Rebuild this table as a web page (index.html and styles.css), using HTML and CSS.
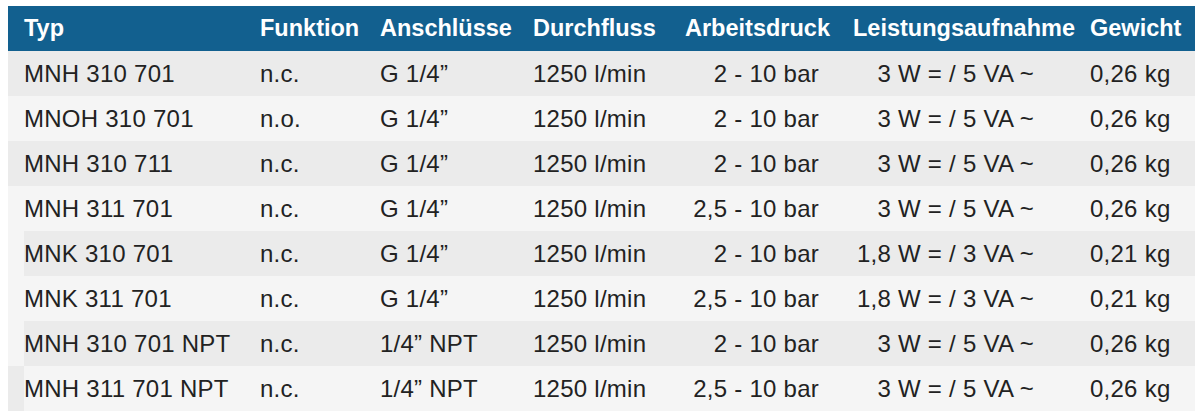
FILE: index.html
```html
<!DOCTYPE html>
<html lang="de">
<head>
<meta charset="utf-8">
<title>Ventile</title>
<link rel="stylesheet" href="styles.css">
</head>
<body>
<div class="page">
  <div class="table">
    <div class="row head">
      <div class="pad"></div>
      <div class="cell">Typ</div>
      <div class="cell">Funktion</div>
      <div class="cell">Anschlüsse</div>
      <div class="cell">Durchfluss</div>
      <div class="cell">Arbeitsdruck</div>
      <div class="cell">Leistungsaufnahme</div>
      <div class="cell">Gewicht</div>
    </div>
    <div class="row dark">
      <div class="pad pd"></div>
      <div class="cell">MNH 310 701</div>
      <div class="cell">n.c.</div>
      <div class="cell">G 1/4”</div>
      <div class="cell">1250 l/min</div>
      <div class="cell num druck">2 - 10 bar</div>
      <div class="cell num leist">3 W = / 5 VA ~</div>
      <div class="cell">0,26 kg</div>
    </div>
    <div class="row light">
      <div class="pad pl"></div>
      <div class="cell">MNOH 310 701</div>
      <div class="cell">n.o.</div>
      <div class="cell">G 1/4”</div>
      <div class="cell">1250 l/min</div>
      <div class="cell num druck">2 - 10 bar</div>
      <div class="cell num leist">3 W = / 5 VA ~</div>
      <div class="cell">0,26 kg</div>
    </div>
    <div class="row dark">
      <div class="pad pd"></div>
      <div class="cell">MNH 310 711</div>
      <div class="cell">n.c.</div>
      <div class="cell">G 1/4”</div>
      <div class="cell">1250 l/min</div>
      <div class="cell num druck">2 - 10 bar</div>
      <div class="cell num leist">3 W = / 5 VA ~</div>
      <div class="cell">0,26 kg</div>
    </div>
    <div class="row light">
      <div class="pad pl"></div>
      <div class="cell">MNH 311 701</div>
      <div class="cell">n.c.</div>
      <div class="cell">G 1/4”</div>
      <div class="cell">1250 l/min</div>
      <div class="cell num druck">2,5 - 10 bar</div>
      <div class="cell num leist">3 W = / 5 VA ~</div>
      <div class="cell">0,26 kg</div>
    </div>
    <div class="row dark">
      <div class="pad pl"></div>
      <div class="cell">MNK 310 701</div>
      <div class="cell">n.c.</div>
      <div class="cell">G 1/4”</div>
      <div class="cell">1250 l/min</div>
      <div class="cell num druck">2 - 10 bar</div>
      <div class="cell num leist">1,8 W = / 3 VA ~</div>
      <div class="cell">0,21 kg</div>
    </div>
    <div class="row light">
      <div class="pad pl"></div>
      <div class="cell">MNK 311 701</div>
      <div class="cell">n.c.</div>
      <div class="cell">G 1/4”</div>
      <div class="cell">1250 l/min</div>
      <div class="cell num druck">2,5 - 10 bar</div>
      <div class="cell num leist">1,8 W = / 3 VA ~</div>
      <div class="cell">0,21 kg</div>
    </div>
    <div class="row dark">
      <div class="pad pl"></div>
      <div class="cell">MNH 310 701 NPT</div>
      <div class="cell">n.c.</div>
      <div class="cell">1/4” NPT</div>
      <div class="cell">1250 l/min</div>
      <div class="cell num druck">2 - 10 bar</div>
      <div class="cell num leist">3 W = / 5 VA ~</div>
      <div class="cell">0,26 kg</div>
    </div>
    <div class="row light">
      <div class="pad pd"></div>
      <div class="cell">MNH 311 701 NPT</div>
      <div class="cell">n.c.</div>
      <div class="cell">1/4” NPT</div>
      <div class="cell">1250 l/min</div>
      <div class="cell num druck">2,5 - 10 bar</div>
      <div class="cell num leist">3 W = / 5 VA ~</div>
      <div class="cell">0,26 kg</div>
    </div>
  </div>
</div>
</body>
</html>
```

FILE: styles.css
```css
html, body {
  margin: 0;
  padding: 0;
  background: #ffffff;
}

.page {
  padding: 6px 0 0 8px;
}

.table {
  width: 1187px;
  font-family: "Liberation Sans", Arial, Helvetica, sans-serif;
  font-size: 24px;
  letter-spacing: 0.25px;
  color: #222222;
}

.row {
  display: grid;
  grid-template-columns: 16px 236px 120px 153px 152px 168px 237px 105px;
  height: 45px;
  align-items: center;
}

.cell {
  white-space: nowrap;
  line-height: 45px;
}

.head {
  background: #12608f;
  color: #ffffff;
  font-weight: bold;
  font-size: 23.5px;
  letter-spacing: 0;
}

.dark {
  background: #ebebeb;
}

.light {
  background: #f5f5f5;
}

.pad {
  align-self: stretch;
}

.pd {
  background: #ebebeb;
}

.pl {
  background: #f5f5f5;
}

.num {
  text-align: right;
}

.druck {
  padding-right: 34px;
}

.leist {
  padding-right: 56px;
}
```
